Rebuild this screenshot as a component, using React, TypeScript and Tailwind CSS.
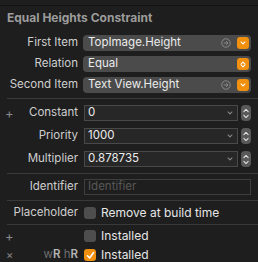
import React from "react";

const font = { fontFamily: "Inter, 'Noto Sans', sans-serif" };

function Chevron({ dir = "down", className = "" }: { dir?: "up" | "down"; className?: string }) {
  return (
    <svg width="7" height="5" viewBox="0 0 7 5" className={className}>
      <path
        d={dir === "down" ? "M1 1.2 L3.5 3.7 L6 1.2" : "M1 3.8 L3.5 1.3 L6 3.8"}
        fill="none"
        stroke="currentColor"
        strokeWidth="1.3"
        strokeLinecap="round"
        strokeLinejoin="round"
      />
    </svg>
  );
}

function GoIcon() {
  return (
    <svg width="10" height="10" viewBox="0 0 10 10" className="text-[#8e8e8e]">
      <circle cx="5" cy="5" r="4.2" fill="none" stroke="currentColor" strokeWidth="0.9" />
      <path d="M2.8 5 H7 M5.2 3.2 L7 5 L5.2 6.8" fill="none" stroke="currentColor" strokeWidth="0.9" />
    </svg>
  );
}

function Label({ children }: { children: React.ReactNode }) {
  return (
    <div className="w-[78px] shrink-0 text-right text-[11.5px] leading-none text-[#cfcfcf]">
      {children}
    </div>
  );
}

function Popup({ value, go, updown }: { value: string; go?: boolean; updown?: boolean }) {
  return (
    <div className="ml-[5px] flex h-4 w-[168px] items-center rounded-[4px] bg-[#4b4b4b] pl-[5px] pr-[2px]">
      <span className="flex-1 text-[11.5px] leading-none text-[#ececec]">{value}</span>
      {go && (
        <span className="mr-[6px] flex">
          <GoIcon />
        </span>
      )}
      <span className="flex h-3 w-3 flex-col items-center justify-center rounded-[3px] bg-[#f0900e] text-white">
        {updown ? (
          <>
            <Chevron dir="up" className="-mb-[1px] h-[4px] w-[6px]" />
            <Chevron dir="down" className="h-[4px] w-[6px]" />
          </>
        ) : (
          <Chevron dir="down" className="h-[4px] w-[6px]" />
        )}
      </span>
    </div>
  );
}

function Stepper() {
  return (
    <div className="ml-[3px] flex h-4 w-[10px] flex-col items-center justify-center gap-[1px] rounded-[4px] bg-[#595959] text-[#e0e0e0]">
      <Chevron dir="up" className="h-[5px] w-[6px]" />
      <Chevron dir="down" className="h-[5px] w-[6px]" />
    </div>
  );
}

function Field({ value }: { value: string }) {
  return (
    <div className="flex items-center">
      <div className="ml-[6px] flex h-4 w-[154px] items-center border border-[#494949] bg-[#272727] pl-[3px] pr-[4px]">
        <span className="flex-1 text-[11.5px] leading-none text-[#ececec]">{value}</span>
        <Chevron className="h-[4px] w-[6px] text-[#8a8a8a]" />
      </div>
      <Stepper />
    </div>
  );
}

function Check({ on }: { on?: boolean }) {
  return on ? (
    <span className="flex h-3 w-3 items-center justify-center rounded-[3px] bg-[#f0900e]">
      <svg width="9" height="9" viewBox="0 0 9 9">
        <path d="M1.5 4.8 L3.6 7 L7.6 1.6" fill="none" stroke="white" strokeWidth="1.6" strokeLinecap="round" strokeLinejoin="round" />
      </svg>
    </span>
  ) : (
    <span className="h-3 w-3 rounded-[3px] bg-[#4e4e4e]" />
  );
}

function Sep() {
  return <div className="ml-[7px] h-px bg-[#393939]" />;
}

export default function App() {
  return (
    <div style={font} className="relative h-[262px] w-[258px] overflow-hidden bg-[#1e1e1e]">
      <div className="h-[5px]" />
      <div className="h-px bg-[#131313]" />
      <div className="pl-[7px] pt-[5px] text-[12px] font-bold leading-[14px] text-[#9c9c9c]">
        Equal Heights Constraint
      </div>

      <div className="mt-[10px] flex flex-col gap-[5px]">
        <div className="flex items-center">
          <Label>First Item</Label>
          <Popup value="TopImage.Height" go />
        </div>
        <div className="flex items-center">
          <Label>Relation</Label>
          <Popup value="Equal" updown />
        </div>
        <div className="flex items-center">
          <Label>Second Item</Label>
          <Popup value="Text View.Height" go />
        </div>
      </div>

      <div className="mb-[6px] mt-[5px]">
        <Sep />
      </div>

      <div className="flex flex-col gap-[7px]">
        <div className="relative flex items-center">
          <span className="absolute left-[5px] text-[13px] leading-none text-[#8a8a8a]">+</span>
          <Label>Constant</Label>
          <Field value="0" />
        </div>
        <div className="flex items-center">
          <Label>Priority</Label>
          <Field value="1000" />
        </div>
        <div className="flex items-center">
          <Label>Multiplier</Label>
          <Field value="0.878735" />
        </div>
      </div>

      <div className="mb-[5px] mt-[6px]">
        <Sep />
      </div>

      <div className="flex items-center">
        <Label>Identifier</Label>
        <div className="ml-[6px] flex h-4 w-[167px] items-center border border-[#3e3e3e] bg-[#1e1e1e] pl-[3px] text-[11.5px] leading-none text-[#575757]">
          Identifier
        </div>
      </div>

      <div className="mb-[6px] mt-[5px]">
        <Sep />
      </div>

      <div className="flex items-center">
        <Label>Placeholder</Label>
        <div className="ml-[6px] flex items-center gap-[5px]">
          <Check />
          <span className="text-[12px] leading-none text-[#e6e6e6]">Remove at build time</span>
        </div>
      </div>

      <div className="mb-[5px] mt-[5px]">
        <Sep />
      </div>

      <div className="relative flex items-center">
        <span className="absolute left-[5px] text-[13px] leading-none text-[#8a8a8a]">+</span>
        <Label>&nbsp;</Label>
        <div className="ml-[6px] flex items-center gap-[5px]">
          <Check />
          <span className="text-[12px] leading-none text-[#e6e6e6]">Installed</span>
        </div>
      </div>

      <div className="relative mt-[7px] flex items-center">
        <span className="absolute left-[6px] text-[11px] leading-none text-[#8a8a8a]">×</span>
        <Label>
          <span className="text-[#6e6e6e]">w</span>
          <span className="font-semibold text-[#b4b4b4]">R</span>{" "}
          <span className="text-[#6e6e6e]">h</span>
          <span className="font-semibold text-[#b4b4b4]">R</span>
        </Label>
        <div className="ml-[6px] flex items-center gap-[5px]">
          <Check on />
          <span className="text-[12px] leading-none text-[#e6e6e6]">Installed</span>
        </div>
      </div>
    </div>
  );
}
